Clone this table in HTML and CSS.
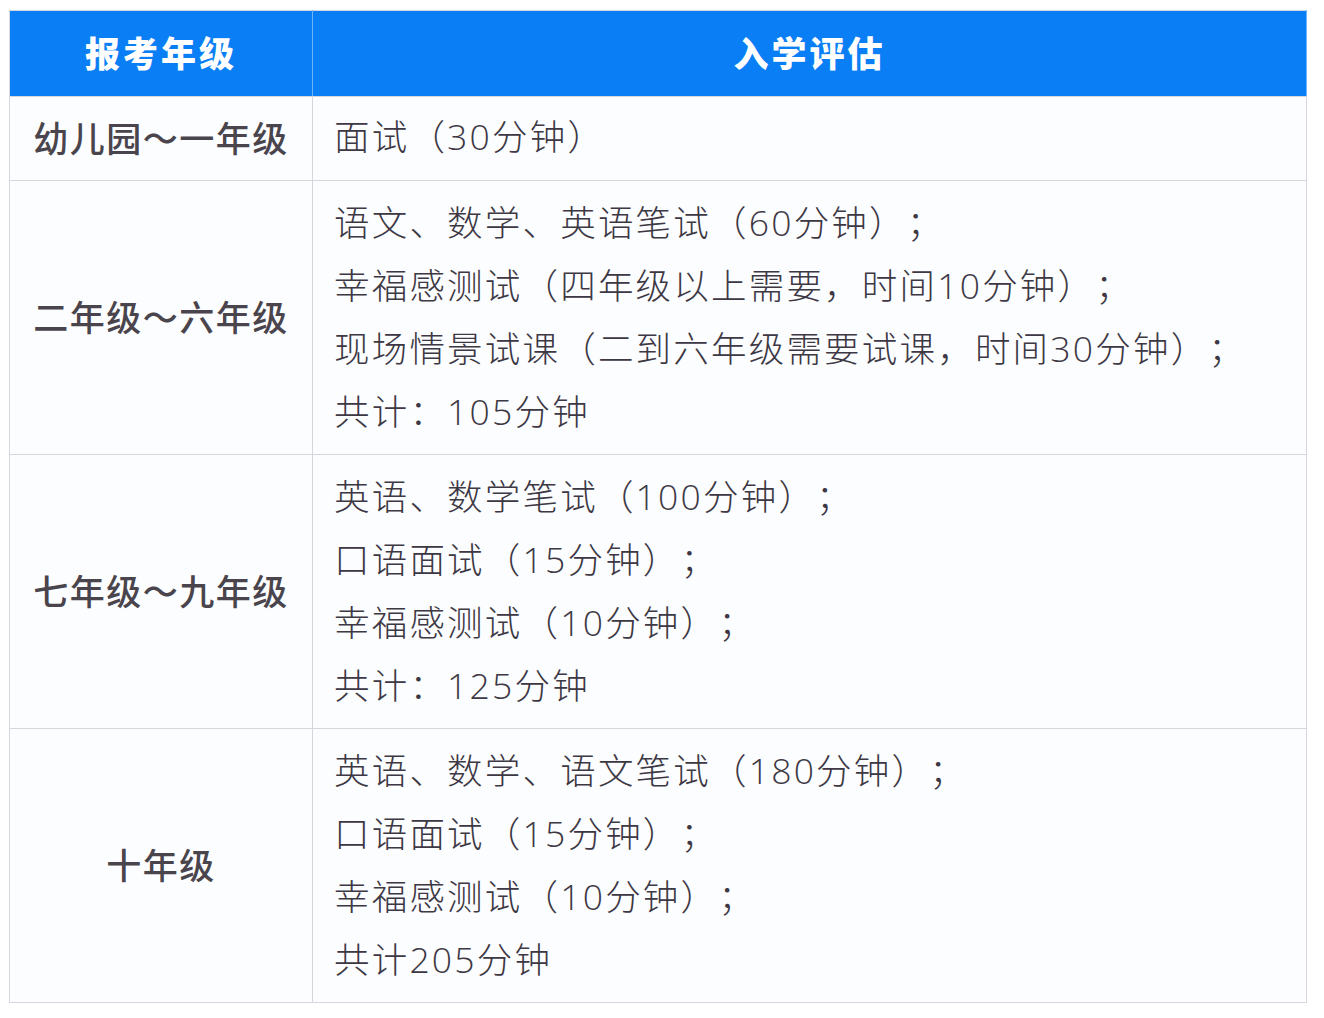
FILE: index.html
```html
<!DOCTYPE html>
<html lang="zh-CN">
<head>
<meta charset="utf-8">
<link rel="stylesheet" href="styles.css">
</head>
<body>
<table class="exam">
  <thead>
    <tr>
      <th class="col-grade">报考年级</th>
      <th class="col-eval">入学评估</th>
    </tr>
  </thead>
  <tbody>
    <tr class="row-single">
      <td class="grade">幼儿园～一年级</td>
      <td class="eval"><div>面试（30分钟）</div></td>
    </tr>
    <tr>
      <td class="grade">二年级～六年级</td>
      <td class="eval">
        <div>语文、数学、英语笔试（60分钟）；</div>
        <div>幸福感测试（四年级以上需要，时间10分钟）；</div>
        <div>现场情景试课（二到六年级需要试课，时间30分钟）；</div>
        <div>共计：105分钟</div>
      </td>
    </tr>
    <tr>
      <td class="grade">七年级～九年级</td>
      <td class="eval">
        <div>英语、数学笔试（100分钟）；</div>
        <div>口语面试（15分钟）；</div>
        <div>幸福感测试（10分钟）；</div>
        <div>共计：125分钟</div>
      </td>
    </tr>
    <tr>
      <td class="grade">十年级</td>
      <td class="eval">
        <div>英语、数学、语文笔试（180分钟）；</div>
        <div>口语面试（15分钟）；</div>
        <div>幸福感测试（10分钟）；</div>
        <div>共计205分钟</div>
      </td>
    </tr>
  </tbody>
</table>
</body>
</html>
```

FILE: styles.css
```css
html, body {
  margin: 0;
  padding: 0;
  background: #ffffff;
}
body {
  padding: 10px 0 0 9px;
  font-family: "Noto Sans CJK SC", "Noto Sans", sans-serif;
  text-spacing-trim: space-all;
}
.exam {
  border-collapse: collapse;
  width: 1298px;
  border: 1px solid #d6d6de;
  background: #fcfdff;
}
.exam th {
  background: #0a7ef5;
  color: #ffffff;
  font-size: 35px;
  font-weight: 900;
  letter-spacing: 3px;
  height: 86px;
  padding: 0 0 4px 0;
  box-sizing: border-box;
  text-align: center;
  vertical-align: middle;
  border-right: 1px solid #6fb3f8;
  border-bottom: 1px solid #d6d6de;
}
.exam th.col-grade {
  width: 303px;
}
.exam td {
  border: 1px solid #d6d6de;
  padding: 0;
  vertical-align: middle;
}
.grade {
  text-align: center;
  font-size: 35px;
  font-weight: 500;
  letter-spacing: 1.5px;
  color: #4a454c;
  padding-bottom: 4px !important;
}
.eval {
  padding: 10px 0 11px 21px !important;
  font-family: "Open Sans", "Noto Sans CJK SC", sans-serif;
  font-size: 35.5px;
  font-weight: 300;
  letter-spacing: 2.2px;
  line-height: 63px;
  color: #3d3844;
}
.row-single .eval {
  padding: 8px 0 12px 21px !important;
}
```
